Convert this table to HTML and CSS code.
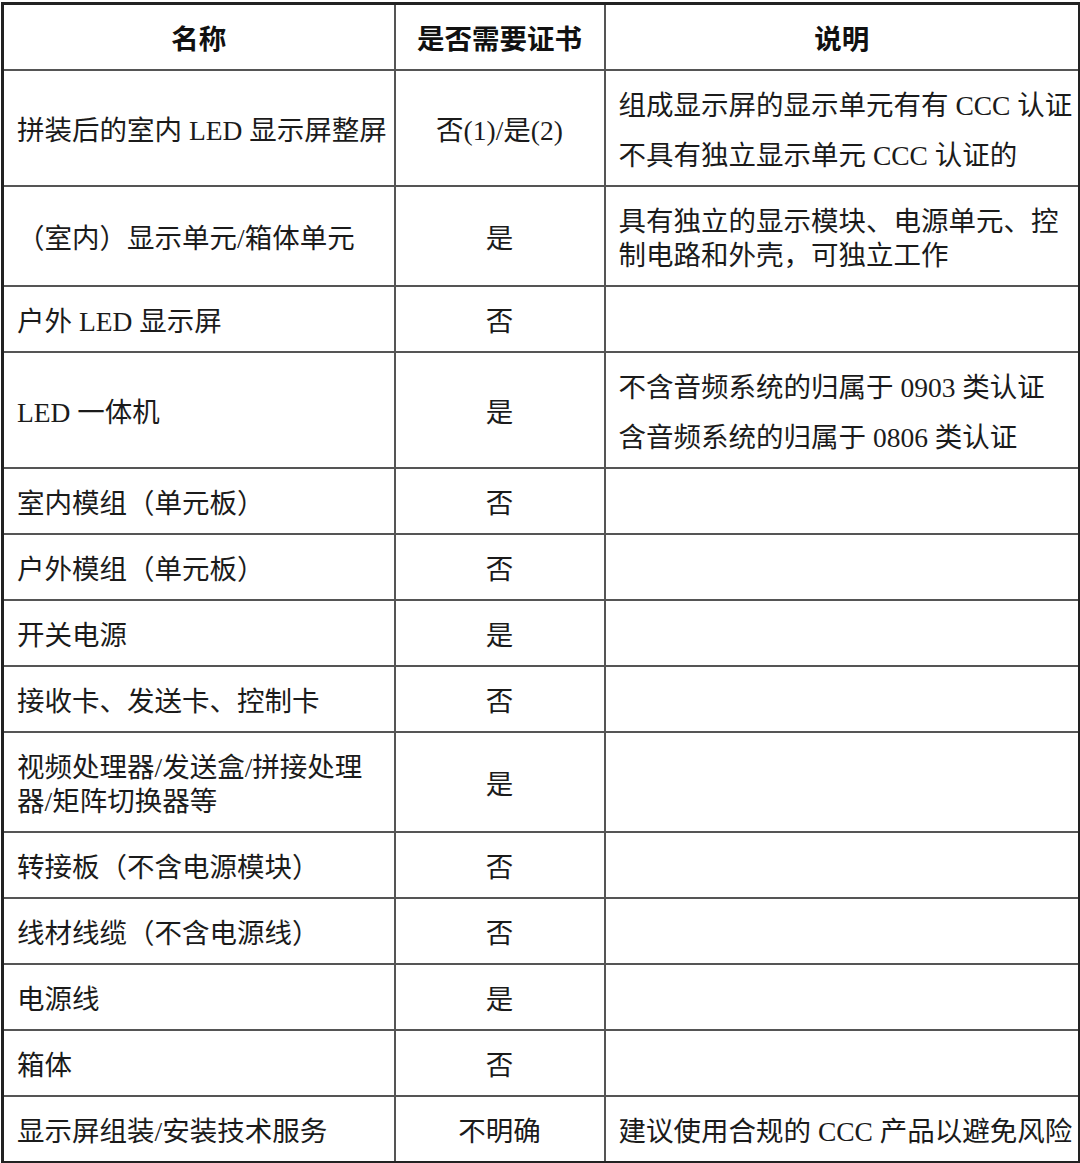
FILE: index.html
```html
<!DOCTYPE html>
<html lang="zh-CN">
<head>
<meta charset="utf-8">
<title>LED 显示屏 CCC 认证</title>
<link rel="stylesheet" href="styles.css">
</head>
<body>
<table class="cert">
  <colgroup>
    <col class="c-name">
    <col class="c-need">
    <col class="c-note">
  </colgroup>
  <thead>
    <tr>
      <th>名称</th>
      <th>是否需要证书</th>
      <th>说明</th>
    </tr>
  </thead>
  <tbody>
    <tr>
      <td class="name">拼装后的室内<span class="lat"> LED </span>显示屏整屏</td>
      <td class="need">否<span class="lat">(1)/</span>是<span class="lat">(2)</span></td>
      <td class="note"><p>组成显示屏的显示单元有有<span class="lat"> CCC </span>认证</p><p>不具有独立显示单元<span class="lat"> CCC </span>认证的</p></td>
    </tr>
    <tr>
      <td class="name">（室内）显示单元<span class="lat">/</span>箱体单元</td>
      <td class="need">是</td>
      <td class="note"><p>具有独立的显示模块、电源单元、控<br>制电路和外壳，可独立工作</p></td>
    </tr>
    <tr>
      <td class="name">户外<span class="lat"> LED </span>显示屏</td>
      <td class="need">否</td>
      <td class="note"></td>
    </tr>
    <tr>
      <td class="name"><span class="lat">LED </span>一体机</td>
      <td class="need">是</td>
      <td class="note"><p>不含音频系统的归属于<span class="lat"> 0903 </span>类认证</p><p>含音频系统的归属于<span class="lat"> 0806 </span>类认证</p></td>
    </tr>
    <tr>
      <td class="name">室内模组（单元板）</td>
      <td class="need">否</td>
      <td class="note"></td>
    </tr>
    <tr>
      <td class="name">户外模组（单元板）</td>
      <td class="need">否</td>
      <td class="note"></td>
    </tr>
    <tr>
      <td class="name">开关电源</td>
      <td class="need">是</td>
      <td class="note"></td>
    </tr>
    <tr>
      <td class="name">接收卡、发送卡、控制卡</td>
      <td class="need">否</td>
      <td class="note"></td>
    </tr>
    <tr>
      <td class="name">视频处理器<span class="lat">/</span>发送盒<span class="lat">/</span>拼接处理<br>器<span class="lat">/</span>矩阵切换器等</td>
      <td class="need">是</td>
      <td class="note"></td>
    </tr>
    <tr>
      <td class="name">转接板（不含电源模块）</td>
      <td class="need">否</td>
      <td class="note"></td>
    </tr>
    <tr>
      <td class="name">线材线缆（不含电源线）</td>
      <td class="need">否</td>
      <td class="note"></td>
    </tr>
    <tr>
      <td class="name">电源线</td>
      <td class="need">是</td>
      <td class="note"></td>
    </tr>
    <tr>
      <td class="name">箱体</td>
      <td class="need">否</td>
      <td class="note"></td>
    </tr>
    <tr>
      <td class="name">显示屏组装<span class="lat">/</span>安装技术服务</td>
      <td class="need">不明确</td>
      <td class="note"><p>建议使用合规的<span class="lat"> CCC </span>产品以避免风险</p></td>
    </tr>
  </tbody>
</table>
</body>
</html>
```

FILE: styles.css
```css
html, body {
  background: #ffffff;
}

body {
  margin: 0;
  padding: 2px 0 0 1px;
  font-family: "Noto Sans CJK SC", "Noto Sans CJK JP", sans-serif;
  color: #1b1b1b;
}

.cert {
  width: 1077px;
  table-layout: fixed;
  border-collapse: collapse;
  border: 3px solid #222222;
}

.c-name { width: 392px; }
.c-need { width: 210px; }
.c-note { width: 475px; }

.cert th,
.cert td {
  border: 2px solid #555555;
  padding: 15px 13px;
  font-size: 27.5px;
  line-height: 34px;
  vertical-align: middle;
  white-space: nowrap;
  overflow: visible;
}

.cert th {
  font-weight: 700;
  text-align: center;
  color: #111111;
}

.cert td {
  font-weight: 400;
}

.name {
  text-align: left;
}

.need {
  text-align: center;
}

.note {
  text-align: left;
}

.note p {
  margin: 0;
}

.note p + p {
  margin-top: 16px;
}

.lat {
  font-family: "Liberation Serif", "Noto Sans CJK SC", serif;
  line-height: 1;
}
```
